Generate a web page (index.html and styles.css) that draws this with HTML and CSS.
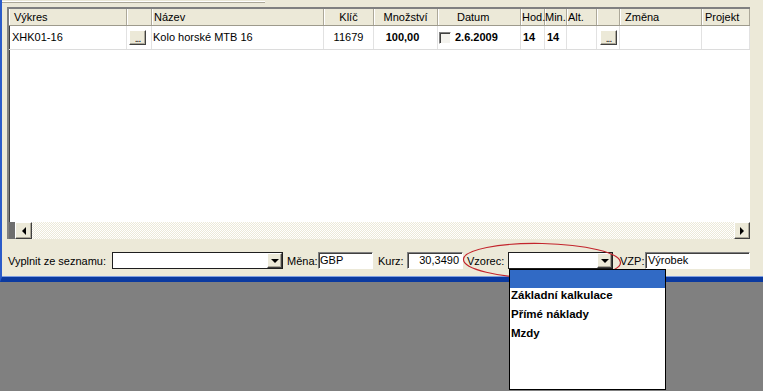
FILE: index.html
```html
<!DOCTYPE html>
<html lang="cs">
<head>
    <meta charset="UTF-8">
    <title>Výkresy</title>
    <link rel="stylesheet" href="styles.css">
</head>
<body>
    <div class="window">
        <div class="top-strip"><div class="top-line"></div></div>

        <div class="grid">
            <div class="row head">
                <div class="c pl5">Výkres</div>
                <div class="c"></div>
                <div class="c pl2">Název</div>
                <div class="c center">Klíč</div>
                <div class="c center">Množství</div>
                <div class="c pl19">Datum</div>
                <div class="c pl1">Hod.</div>
                <div class="c">Min.</div>
                <div class="c pl1">Alt.</div>
                <div class="c"></div>
                <div class="c pl5">Změna</div>
                <div class="c pl3">Projekt</div>
            </div>
            <div class="row data">
                <div class="c pl4">XHK01-16</div>
                <div class="c"><span class="dots-btn">...</span></div>
                <div class="c pl1">Kolo horské MTB 16</div>
                <div class="c center">11679</div>
                <div class="c center pr6 bold">100,00</div>
                <div class="c pl1"><span class="check"></span><span class="bold">2.6.2009</span></div>
                <div class="c pl2 bold">14</div>
                <div class="c pl2 bold">14</div>
                <div class="c"></div>
                <div class="c"><span class="dots-btn ml4">...</span></div>
                <div class="c"></div>
                <div class="c"></div>
            </div>
            <div class="grid-empty"></div>
            <div class="hscroll">
                <div class="hscroll-edge"></div>
                <div class="sbtn"><span class="tri-left"></span></div>
                <div class="track"></div>
                <div class="sbtn"><span class="tri-right"></span></div>
            </div>
        </div>

        <div class="toolbar">
            <span class="lbl w-vyplnit">Vyplnit ze seznamu:</span>
            <div class="combo w-seznam"><span class="combo-btn"><span class="tri-down"></span></span></div>

            <span class="lbl ml4 w-mena">Měna:</span>
            <div class="input w-mena-in">GBP</div>

            <span class="lbl ml5 w-kurz">Kurz:</span>
            <div class="input w-kurz-in right">30,3490</div>

            <span class="lbl ml4 w-vzorec">Vzorec:</span>
            <div class="combo w-vzorec-in">
                <span class="combo-btn"><span class="tri-down"></span></span>
                <div class="dropdown">
                    <div class="opt selected"></div>
                    <div class="opt">Základní kalkulace</div>
                    <div class="opt">Přímé náklady</div>
                    <div class="opt">Mzdy</div>
                </div>
            </div>

            <span class="lbl ml7 w-vzp">VZP:</span>
            <div class="input w-vzp-in">Výrobek</div>

            <svg class="circle-mark" width="161" height="39" viewBox="0 0 161 39">
                <ellipse cx="80" cy="19" rx="78.5" ry="17.5" transform="rotate(1.2 80 19)" fill="none" stroke="#c3242c" stroke-width="1.2"/>
            </svg>
        </div>
    </div>
    <div class="desktop"></div>
</body>
</html>
```

FILE: styles.css
```css
html,
body {
    height: 100%;
}

body {
    margin: 0;
    background: #808080;
    font-family: "Liberation Sans", Arial, sans-serif;
    font-size: 11px;
    color: #000;
    display: flex;
    flex-direction: column;
}

.window {
    height: 282px;
    flex-shrink: 0;
    box-sizing: border-box;
    background: #ece9d8;
    border-left: 2px solid #2b5bc9;
    border-bottom: 5px solid #0b3aa0;
    box-shadow: inset 0 -1px 0 #7f9ee0;
    position: relative;
    z-index: 2;
}

.desktop {
    flex: 1;
    background: #808080;
}

.top-strip {
    height: 5px;
}

.top-line {
    width: 263px;
    height: 1px;
    margin-top: 2px;
    background: #aca899;
    box-shadow: 0 -1px 0 #fff;
}

/* grille */
.grid {
    margin-left: 5px;
    width: 743px;
    height: 232px;
    box-sizing: border-box;
    border-top: 2px solid #808080;
    border-left: 2px solid #808080;
    box-shadow: inset 1px 1px 0 #404040;
    background: #fff;
    display: flex;
    flex-direction: column;
}

.row {
    display: grid;
    grid-template-columns: 118px 25px 172px 50px 64px 83px 24px 22px 30px 23px 82px 48px;
}

.row.head {
    height: 17px;
    background: #ece9d8;
    border-bottom: 1px solid #9d9a8c;
    box-sizing: border-box;
}

.row.head .c {
    line-height: 16px;
    border-right: 1px solid #aca899;
    box-shadow: inset 1px 0 0 #fff;
    overflow: visible;
}

.row.data {
    height: 23px;
    border-bottom: 1px solid #dcdcdc;
}

.row.data .c {
    line-height: 23px;
    border-right: 1px solid #e2e2e2;
    display: flex;
    align-items: center;
}

.row.data .c.center {
    justify-content: center;
}

.c {
    white-space: nowrap;
    overflow: hidden;
    box-sizing: border-box;
}

.center { text-align: center; }
.bold { font-weight: bold; }
.pl1 { padding-left: 1px; }
.pl2 { padding-left: 2px; }
.pl3 { padding-left: 3px; }
.pl4 { padding-left: 3px; }
.pl5 { padding-left: 5px; }
.pl19 { padding-left: 19px; }
.pr6 { padding-right: 6px; }

.dots-btn {
    display: inline-block;
    width: 17px;
    height: 15px;
    box-sizing: border-box;
    margin-left: 2px;
    background: #ece9d8;
    border-top: 1px solid #fff;
    border-left: 1px solid #fff;
    border-right: 1px solid #404040;
    border-bottom: 1px solid #404040;
    box-shadow: inset -1px -1px 0 #aca899;
    font-size: 10px;
    line-height: 16px;
    text-align: center;
    letter-spacing: -1px;
}

.dots-btn.ml4 { margin-left: 3px; }

.check {
    display: inline-block;
    width: 12px;
    height: 12px;
    box-sizing: border-box;
    margin-right: 4px;
    background: #f4f3ee;
    border-top: 1px solid #808080;
    border-left: 1px solid #808080;
    border-right: 1px solid #fff;
    border-bottom: 1px solid #fff;
    box-shadow: inset 1px 1px 0 #404040;
}

.grid-empty {
    flex: 1;
}

/* posuvník */
.hscroll {
    height: 17px;
    display: flex;
}

.hscroll-edge {
    width: 6px;
    background: #6e6e6e;
}

.sbtn {
    width: 17px;
    box-sizing: border-box;
    background: #ece9d8;
    border-top: 1px solid #fff;
    border-left: 1px solid #fff;
    border-right: 1px solid #404040;
    border-bottom: 1px solid #404040;
    box-shadow: inset -1px -1px 0 #aca899;
    display: flex;
    align-items: center;
    justify-content: center;
}

.sbtn + .track + .sbtn {
    width: 16px;
}

.track {
    flex: 1;
    background: repeating-conic-gradient(#ece9d8 0 25%, #fff 0 50%) 0 0 / 2px 2px;
}

.tri-left,
.tri-right,
.tri-down {
    width: 0;
    height: 0;
    border: 4px solid transparent;
}

.tri-left {
    border-right-color: #000;
    border-left-width: 0;
}

.tri-right {
    border-left-color: #000;
    border-right-width: 0;
}

.tri-down {
    border-top-color: #000;
    border-bottom-width: 0;
    border-left-width: 4px;
    border-right-width: 4px;
}

/* spodní lišta */
.toolbar {
    position: relative;
    margin-top: 13px;
    padding-left: 6px;
    display: flex;
    align-items: center;
    height: 17px;
}

.lbl {
    white-space: nowrap;
    box-sizing: border-box;
}

.ml4 { margin-left: 4px; }
.ml5 { margin-left: 5px; }
.ml7 { margin-left: 7px; }

.w-vyplnit { width: 104px; }
.w-mena { width: 31px; }
.w-kurz { width: 29px; }
.w-vzorec { width: 41px; }
.w-vzp { width: 25px; }

.input,
.combo {
    height: 17px;
    box-sizing: border-box;
    background: #fff;
    line-height: 15px;
    padding-left: 1px;
    white-space: nowrap;
}

.input {
    border-top: 1px solid #808080;
    border-left: 1px solid #808080;
    border-right: 1px solid #fff;
    border-bottom: 1px solid #fff;
    box-shadow: inset 1px 1px 0 #404040;
}

.input.right {
    text-align: right;
    padding-right: 3px;
}

.w-mena-in { width: 55px; }
.w-kurz-in { width: 56px; }
.w-vzp-in { width: 105px; padding-left: 2px; }

.combo {
    position: relative;
    border: 1px solid #1e1e1e;
    display: flex;
    justify-content: flex-end;
    padding: 0;
}

.w-seznam { width: 171px; }
.w-vzorec-in { width: 105px; }

.combo-btn {
    width: 15px;
    height: 15px;
    box-sizing: border-box;
    background: #ece9d8;
    border-top: 1px solid #fff;
    border-left: 1px solid #fff;
    border-right: 1px solid #404040;
    border-bottom: 1px solid #404040;
    box-shadow: inset -1px -1px 0 #aca899;
    display: flex;
    align-items: center;
    justify-content: center;
}

.dropdown {
    position: absolute;
    top: 16px;
    left: 0;
    width: 157px;
    height: 121px;
    box-sizing: border-box;
    background: #fff;
    border: 1px solid #000;
    z-index: 10;
}

.opt {
    height: 19px;
    line-height: 15px;
    padding-left: 1px;
    font-size: 11.5px;
    font-weight: bold;
    white-space: nowrap;
}

.opt.selected {
    height: 18px;
    background: #316ac5;
}

.circle-mark {
    position: absolute;
    left: 460px;
    top: -10px;
    pointer-events: none;
    z-index: 5;
}
```
